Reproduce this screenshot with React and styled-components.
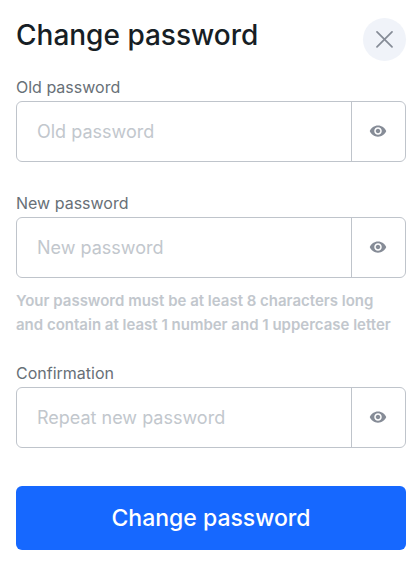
import React, {useState} from 'react'
import styled, {createGlobalStyle} from 'styled-components'
import {MdVisibility} from 'react-icons/md'

const fields = [
    {id: 'old-password', label: 'Old password', placeholder: 'Old password'},
    {
        id: 'new-password',
        label: 'New password',
        placeholder: 'New password',
        hint: 'Your password must be at least 8 characters long\nand contain at least 1 number and 1 uppercase letter'
    },
    {id: 'confirmation', label: 'Confirmation', placeholder: 'Repeat new password'}
]

function PasswordField({id, label, placeholder, hint}) {
    const [visible, setVisible] = useState(false)
    return (
        <Field $hasHint={!!hint}>
            <Label htmlFor={id}>{label}</Label>
            <InputGroup>
                <Input
                    id={id}
                    name={id}
                    type={visible ? 'text' : 'password'}
                    placeholder={placeholder}
                    aria-describedby={hint ? `${id}-hint` : undefined}/>
                <ToggleButton
                    type="button"
                    aria-label={visible ? 'Hide password' : 'Show password'}
                    onClick={() => setVisible(!visible)}>
                    <MdVisibility size={18}/>
                </ToggleButton>
            </InputGroup>
            {hint && <Hint id={`${id}-hint`}>{hint}</Hint>}
        </Field>
    )
}

export default function App() {
    return (
        <>
            <GlobalStyle/>
            <Dialog>
                <Header>
                    <Title>Change password</Title>
                    <CloseButton type="button" aria-label="Close">
                        <svg width="18" height="18" viewBox="0 0 18 18" fill="none" stroke="currentColor" strokeWidth="1.7" strokeLinecap="round">
                            <path d="M1 .9l15 15M16 .9l-15 15"/>
                        </svg>
                    </CloseButton>
                </Header>
                <form onSubmit={e => e.preventDefault()}>
                    {fields.map(field => <PasswordField key={field.id} {...field}/>)}
                    <SubmitButton type="submit">Change password</SubmitButton>
                </form>
            </Dialog>
        </>
    )
}

const GlobalStyle = createGlobalStyle`
*{
    box-sizing:border-box;
}
body{
    margin:0;
    background:#fff;
    font-family:Inter, "Liberation Sans", sans-serif;
}
button,input{
    font-family:inherit;
}
`

const Dialog = styled.main`
padding:18px 10px 30px 16px;
`

const Header = styled.header`
display:flex;
justify-content:space-between;
align-items:flex-start;
margin-bottom:14px;
`

const Title = styled.h1`
margin:0;
color:#171e25;
font-size:28px;
font-weight:500;
line-height:34px;
`

const CloseButton = styled.button`
display:flex;
align-items:center;
justify-content:center;
flex:none;
width:43px;
height:43px;
padding:0;
border:0;
border-radius:50%;
background:#f0f3f9;
color:#868c97;
cursor:pointer;
`

const Field = styled.div`
margin-bottom:${props => props.$hasHint ? '24px' : '29px'};
`

const Label = styled.label`
display:block;
margin-bottom:2px;
color:#687077;
font-size:16px;
line-height:24px;
`

const InputGroup = styled.div`
display:flex;
height:61px;
border:1px solid #bfc4cb;
border-radius:6px;
overflow:hidden;
&:focus-within{
    border-color:#1668ff;
}
`

const Input = styled.input`
flex:1;
min-width:0;
padding:0 20px;
border:0;
outline:0;
background:transparent;
color:#171e25;
font-size:18px;
&::placeholder{
    color:#c2c7cd;
    opacity:1;
}
`

const ToggleButton = styled.button`
display:flex;
align-items:center;
justify-content:center;
flex:none;
width:54px;
padding:0 1px 2px 0;
border:0;
border-left:1px solid #bfc4cb;
background:transparent;
color:#868c97;
cursor:pointer;
`

const Hint = styled.p`
margin:11px 0 0;
color:#c2c7cd;
font-size:15px;
font-weight:600;
line-height:24px;
white-space:pre-line;
`

const SubmitButton = styled.button`
display:block;
width:100%;
height:64px;
margin-top:38px;
border:0;
border-radius:6px;
background:#1668ff;
color:#fff;
font-size:23px;
font-weight:500;
cursor:pointer;
`
